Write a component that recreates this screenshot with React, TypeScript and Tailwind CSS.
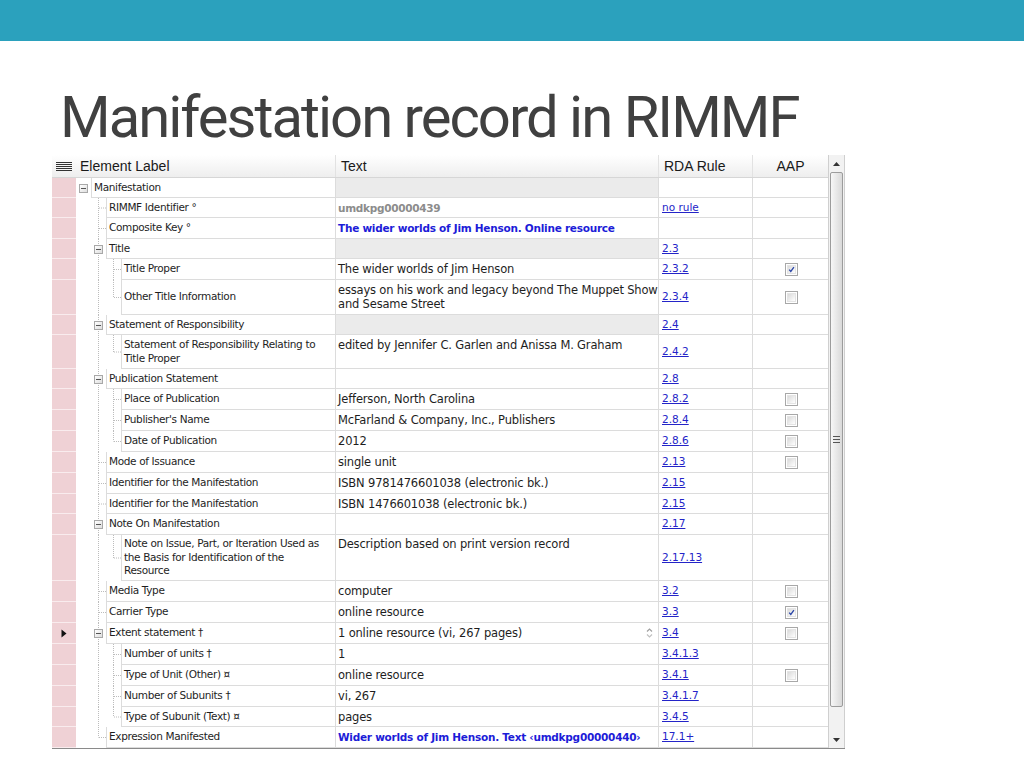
import React from "react";

type Row = {
  h: string;
  level: number;
  group?: boolean;
  last?: boolean;
  label: string | string[];
  text?: string | string[];
  kind?: "id" | "key";
  gray?: boolean;
  top?: string;
  rule?: string;
  aap?: "on" | "off";
  current?: boolean;
  spinner?: boolean;
};

const rows: Row[] = [
  { h: "h-[20px]", level: 0, group: true, label: "Manifestation", gray: true },
  { h: "h-[20px]", level: 1, label: "RIMMF Identifier °", text: "umdkpg00000439", kind: "id", rule: "no rule" },
  { h: "h-[21px]", level: 1, label: "Composite Key °", text: "The wider worlds of Jim Henson. Online resource", kind: "key" },
  { h: "h-[20px]", level: 1, group: true, label: "Title", gray: true, rule: "2.3" },
  { h: "h-[21px]", level: 2, label: "Title Proper", text: "The wider worlds of Jim Henson", rule: "2.3.2", aap: "on" },
  {
    h: "h-[35px]",
    level: 2,
    last: true,
    label: "Other Title Information",
    text: ["essays on his work and legacy beyond The Muppet Show", "and Sesame Street"],
    rule: "2.3.4",
    aap: "off",
  },
  { h: "h-[20px]", level: 1, group: true, label: "Statement of Responsibility", gray: true, rule: "2.4" },
  {
    h: "h-[34px]",
    level: 2,
    last: true,
    label: ["Statement of Responsibility Relating to", "Title Proper"],
    text: "edited by Jennifer C. Garlen and Anissa M. Graham",
    top: "pt-[3px]",
    rule: "2.4.2",
  },
  { h: "h-[20px]", level: 1, group: true, label: "Publication Statement", rule: "2.8" },
  { h: "h-[21px]", level: 2, label: "Place of Publication", text: "Jefferson, North Carolina", rule: "2.8.2", aap: "off" },
  { h: "h-[21px]", level: 2, label: "Publisher's Name", text: "McFarland & Company, Inc., Publishers", rule: "2.8.4", aap: "off" },
  { h: "h-[21px]", level: 2, last: true, label: "Date of Publication", text: "2012", rule: "2.8.6", aap: "off" },
  { h: "h-[21px]", level: 1, label: "Mode of Issuance", text: "single unit", rule: "2.13", aap: "off" },
  { h: "h-[21px]", level: 1, label: "Identifier for the Manifestation", text: "ISBN 9781476601038 (electronic bk.)", rule: "2.15" },
  { h: "h-[20px]", level: 1, label: "Identifier for the Manifestation", text: "ISBN 1476601038 (electronic bk.)", rule: "2.15" },
  { h: "h-[21px]", level: 1, group: true, label: "Note On Manifestation", rule: "2.17" },
  {
    h: "h-[46px]",
    level: 2,
    last: true,
    label: ["Note on Issue, Part, or Iteration Used as", "the Basis for Identification of the", "Resource"],
    text: "Description based on print version record",
    top: "pt-[2px]",
    rule: "2.17.13",
  },
  { h: "h-[21px]", level: 1, label: "Media Type", text: "computer", rule: "3.2", aap: "off" },
  { h: "h-[21px]", level: 1, label: "Carrier Type", text: "online resource", rule: "3.3", aap: "on" },
  {
    h: "h-[21px]",
    level: 1,
    group: true,
    label: "Extent statement †",
    text: "1 online resource (vi, 267 pages)",
    rule: "3.4",
    aap: "off",
    current: true,
    spinner: true,
  },
  { h: "h-[21px]", level: 2, label: "Number of units †", text: "1", rule: "3.4.1.3" },
  { h: "h-[21px]", level: 2, label: "Type of Unit (Other) ¤", text: "online resource", rule: "3.4.1", aap: "off" },
  { h: "h-[21px]", level: 2, label: "Number of Subunits †", text: "vi, 267", rule: "3.4.1.7" },
  { h: "h-[20px]", level: 2, last: true, label: "Type of Subunit (Text) ¤", text: "pages", rule: "3.4.5" },
  {
    h: "h-[21px]",
    level: 1,
    last: true,
    label: "Expression Manifested",
    text: "Wider worlds of Jim Henson. Text ‹umdkpg00000440›",
    kind: "key",
    rule: "17.1+",
  },
];

const tahoma = "font-['DejaVu_Sans',sans-serif]";

function Expander() {
  return (
    <div className="relative w-[9px] h-[9px] border border-[#a8a8a8] bg-gradient-to-br from-white to-[#dedede] flex items-center justify-center">
      <div className="w-[5px] h-px bg-[#555]" />
    </div>
  );
}

// one 15px indent slot of the tree, with its dotted guide lines
function Slot({ vertical, half, dash, box }: { vertical?: boolean; half?: boolean; dash?: boolean; box?: boolean }) {
  return (
    <div className="relative w-[15px] h-full shrink-0 flex items-center justify-center">
      <svg className="absolute inset-0" width="15" height="100%">
        {vertical && (
          <line x1="7.5" y1="0" x2="7.5" y2={half ? "50%" : "100%"} stroke="#bcbcbc" strokeWidth="1" strokeDasharray="1 1" />
        )}
        {dash && <line x1="8" y1="50%" x2="15" y2="50%" stroke="#bcbcbc" strokeWidth="1" strokeDasharray="1 1" />}
      </svg>
      {box && <Expander />}
    </div>
  );
}

function Check({ on }: { on: boolean }) {
  return (
    <div className="w-[13px] h-[13px] border border-[#a8a8a8] p-px">
      <div className="w-full h-full border border-[#e4e4e4] bg-gradient-to-br from-[#dadada] to-white flex items-center justify-center">
        {on && (
          <svg width="9" height="9" viewBox="0 0 9 9">
            <path d="M1.5 4.6 L3.6 7 L7.6 1.4" stroke="#2b46a8" strokeWidth="1.7" fill="none" />
          </svg>
        )}
      </div>
    </div>
  );
}

function Tree({ r }: { r: Row }) {
  if (r.level === 0) return <Slot box />;
  if (r.level === 1)
    return (
      <>
        <Slot />
        <Slot vertical half={r.last} dash={!r.group} box={r.group} />
      </>
    );
  return (
    <>
      <Slot />
      <Slot vertical />
      <Slot vertical half={r.last} dash />
    </>
  );
}

function DataRow({ r }: { r: Row }) {
  const lines = Array.isArray(r.label) ? r.label : [r.label];
  const texts = r.text ? (Array.isArray(r.text) ? r.text : [r.text]) : [];
  const textColor =
    r.kind === "id"
      ? "text-[#8c8c8c] font-bold tracking-[-0.3px] text-[10.5px]"
      : r.kind === "key"
        ? "text-[#1c1cd8] font-bold tracking-[-0.25px] text-[10.5px]"
        : "text-[#1e1e1e] text-[11.5px] tracking-[-0.17px]";
  return (
    <div className={`flex ${r.h}`}>
      <div className="w-[24px] shrink-0 bg-[#efd1d5] border-b border-[#f9ecee] flex items-center justify-center">
        {r.current && (
          <svg width="6" height="9" viewBox="0 0 6 9">
            <path d="M0.5 0.5 L5.5 4.5 L0.5 8.5 Z" fill="#111" />
          </svg>
        )}
      </div>
      <div className="w-[259px] shrink-0 flex">
        <Tree r={r} />
        <div className={`flex-1 flex flex-col justify-center pl-[2px] border-l border-b border-[#dcdcdc] ${tahoma} text-[10.5px] leading-[13.5px] tracking-[-0.35px] text-[#1e1e1e] whitespace-nowrap`}>
          {lines.map((l) => (
            <div key={l}>{l}</div>
          ))}
        </div>
      </div>
      <div
        className={`w-[323px] shrink-0 flex flex-col pl-[2px] border-l border-b border-[#dcdcdc] relative overflow-hidden ${r.gray ? "bg-[#ebebeb]" : "bg-white"} ${r.top ? r.top + " justify-start" : "justify-center"} ${tahoma} leading-[14px] whitespace-nowrap ${textColor}`}
      >
        {texts.map((t) => (
          <div key={t}>{t}</div>
        ))}
        {r.spinner && (
          <svg className="absolute right-[5px] top-[4px]" width="7" height="12" viewBox="0 0 7 12">
            <path d="M1 4.5 L3.5 2 L6 4.5" stroke="#a0a0a0" strokeWidth="1.2" fill="none" />
            <path d="M1 7.5 L3.5 10 L6 7.5" stroke="#c0c0c0" strokeWidth="1.2" fill="none" />
          </svg>
        )}
      </div>
      <div className={`w-[94px] shrink-0 flex items-center pl-[3px] border-l border-b border-[#dcdcdc] ${tahoma} text-[10.5px] text-[#2424c8] underline`}>
        {r.rule}
      </div>
      <div className="w-[76px] shrink-0 flex items-center justify-center border-l border-b border-[#dcdcdc] pl-[2px]">
        {r.aap && <Check on={r.aap === "on"} />}
      </div>
    </div>
  );
}

function Scrollbar() {
  return (
    <div className="w-[17px] shrink-0 flex flex-col bg-[#f2f2f2] border-l border-r border-[#cfcfcf]">
      <div className="h-[17px] flex items-center justify-center">
        <svg width="7" height="4" viewBox="0 0 7 4">
          <path d="M0 4 L3.5 0 L7 4 Z" fill="#333" />
        </svg>
      </div>
      <div className="h-[535px] mx-px rounded-[2px] border border-[#9c9c9c] bg-gradient-to-r from-[#f7f7f7] to-[#d9d9d9] flex items-center justify-center">
        <div className="flex flex-col gap-[2px]">
          <div className="w-[7px] h-px bg-[#555]" />
          <div className="w-[7px] h-px bg-[#555]" />
          <div className="w-[7px] h-px bg-[#555]" />
        </div>
      </div>
      <div className="flex-1" />
      <div className="h-[17px] flex items-center justify-center">
        <svg width="7" height="4" viewBox="0 0 7 4">
          <path d="M0 0 L3.5 4 L7 0 Z" fill="#333" />
        </svg>
      </div>
    </div>
  );
}

export default function App() {
  return (
    <div className="w-[1024px] h-[768px] bg-white overflow-hidden">
      <div className="h-[41px] bg-[#2ba1bd]" />

      <h1 className="mt-[47px] ml-[60px] h-[58px] leading-[58px] text-[58px] font-normal tracking-[-2px] text-[#404040] font-['Roboto',sans-serif]">
        Manifestation record in RIMMF
      </h1>

      <div className="mt-[9px] ml-[52px] w-[793px] flex border-b border-[#8a8a8a]">
        <div className="flex-1">
          {/* column headers */}
          <div className="flex h-[23px] bg-gradient-to-b from-white to-[#eeeeee] border-b border-[#d6d6d6] font-['Liberation_Sans',sans-serif] text-[14px] text-[#1a1a1a]">
            <div className="w-[24px] shrink-0 flex items-center justify-center">
              <svg width="16" height="9" viewBox="0 0 16 9">
                <rect x="0" y="0" width="16" height="1" fill="#333" />
                <rect x="0" y="2" width="16" height="1" fill="#333" />
                <rect x="0" y="4" width="16" height="1" fill="#333" />
                <rect x="0" y="6" width="16" height="1" fill="#333" />
                <rect x="0" y="8" width="16" height="1" fill="#333" />
              </svg>
            </div>
            <div className="w-[259px] shrink-0 flex items-center pl-[4px]">Element Label</div>
            <div className="w-[323px] shrink-0 flex items-center pl-[5px] border-l border-[#e2e2e2]">Text</div>
            <div className="w-[94px] shrink-0 flex items-center pl-[5px] border-l border-[#e2e2e2]">RDA Rule</div>
            <div className="w-[76px] shrink-0 flex items-center justify-center border-l border-[#e2e2e2]">AAP</div>
          </div>

          {rows.map((r, i) => (
            <DataRow key={i} r={r} />
          ))}
        </div>
        <Scrollbar />
      </div>
    </div>
  );
}
